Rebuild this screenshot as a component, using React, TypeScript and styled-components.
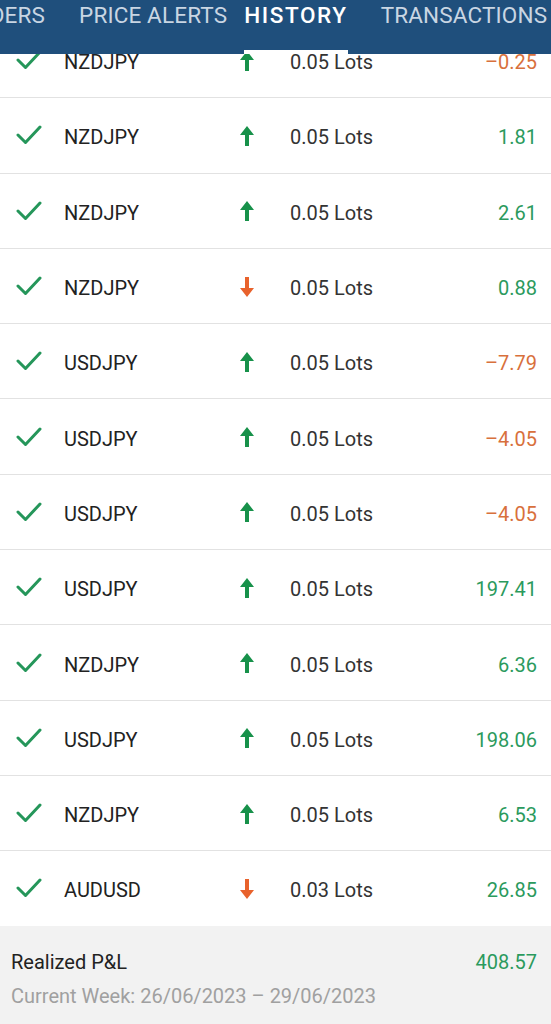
import React from "react";
import styled, { createGlobalStyle } from "styled-components";

interface Trade {
  symbol: string;
  side: "buy" | "sell";
  lots: string;
  pnl: number;
}

// gap = space before the tab label, as laid out in the scrolled tab strip
const tabs = [
  { label: "ORDERS", gap: 0 },
  { label: "PRICE ALERTS", gap: 34 },
  { label: "HISTORY", gap: 17 },
  { label: "TRANSACTIONS", gap: 33 },
];

const trades: Trade[] = [
  { symbol: "NZDJPY", side: "buy", lots: "0.05", pnl: -0.25 },
  { symbol: "NZDJPY", side: "buy", lots: "0.05", pnl: 1.81 },
  { symbol: "NZDJPY", side: "buy", lots: "0.05", pnl: 2.61 },
  { symbol: "NZDJPY", side: "sell", lots: "0.05", pnl: 0.88 },
  { symbol: "USDJPY", side: "buy", lots: "0.05", pnl: -7.79 },
  { symbol: "USDJPY", side: "buy", lots: "0.05", pnl: -4.05 },
  { symbol: "USDJPY", side: "buy", lots: "0.05", pnl: -4.05 },
  { symbol: "USDJPY", side: "buy", lots: "0.05", pnl: 197.41 },
  { symbol: "NZDJPY", side: "buy", lots: "0.05", pnl: 6.36 },
  { symbol: "USDJPY", side: "buy", lots: "0.05", pnl: 198.06 },
  { symbol: "NZDJPY", side: "buy", lots: "0.05", pnl: 6.53 },
  { symbol: "AUDUSD", side: "sell", lots: "0.03", pnl: 26.85 },
];

const formatPnl = (v: number) =>
  v < 0 ? `\u2013${Math.abs(v).toFixed(2)}` : v.toFixed(2);

const CheckIcon = () => (
  <svg width="26" height="22" viewBox="0 0 26 22">
    <polyline
      points="2,11 9.5,18.5 24,3"
      fill="none"
      stroke="#25965a"
      strokeWidth="3"
      strokeLinecap="round"
      strokeLinejoin="round"
    />
  </svg>
);

const SideArrow = ({ side }: { side: "buy" | "sell" }) => (
  <svg
    width="14"
    height="20"
    viewBox="0 0 14 20"
    style={{ transform: side === "sell" ? "rotate(180deg)" : undefined }}
  >
    <path
      d="M7 0 L14 9 L9 9 L9 20 L5 20 L5 9 L0 9 Z"
      fill={side === "buy" ? "#17914a" : "#e8622c"}
    />
  </svg>
);

const App: React.FC = () => {
  return (
    <Page>
      <GlobalStyle />
      <Header>
        <TabTrack>
          {tabs.map((t) => (
            <Tab key={t.label} $active={t.label === "HISTORY"} $gap={t.gap}>
              {t.label}
            </Tab>
          ))}
        </TabTrack>
      </Header>

      <ListViewport>
        <List>
          {trades.map((t, i) => (
            <Row key={i}>
              <CheckCell>
                <CheckIcon />
              </CheckCell>
              <Symbol>{t.symbol}</Symbol>
              <ArrowCell>
                <SideArrow side={t.side} />
              </ArrowCell>
              <Lots>{t.lots} Lots</Lots>
              <Pnl $negative={t.pnl < 0}>{formatPnl(t.pnl)}</Pnl>
            </Row>
          ))}
        </List>
      </ListViewport>

      <Footer>
        <FooterLine>
          <FooterTitle>Realized P&amp;L</FooterTitle>
          <Pnl $negative={false}>408.57</Pnl>
        </FooterLine>
        <FooterSub>Current Week: 26/06/2023 &ndash; 29/06/2023</FooterSub>
      </Footer>
    </Page>
  );
};

export default App;

const GlobalStyle = createGlobalStyle`
  html, body {
    margin: 0;
    padding: 0;
    background: #fff;
  }
  * {
    box-sizing: border-box;
  }
`;

const Page = styled.div`
  width: 551px;
  height: 1024px;
  display: flex;
  flex-direction: column;
  overflow: hidden;
  font-family: Roboto, "Noto Sans", sans-serif;
  background: #fff;
`;

const Header = styled.div`
  height: 54px;
  flex-shrink: 0;
  background: #1f4f7c;
  overflow: hidden;
`;

const TabTrack = styled.div`
  display: flex;
  margin-left: -40px;
  height: 100%;
`;

const Tab = styled.div<{ $active: boolean; $gap: number }>`
  flex-shrink: 0;
  height: 100%;
  margin-left: ${(p) => p.$gap}px;
  padding-top: 2px;
  font-size: 22.5px;
  line-height: 26px;
  letter-spacing: ${(p) => (p.$active ? "1.6px" : "0.15px")};
  white-space: nowrap;
  color: ${(p) => (p.$active ? "#ffffff" : "#c9d6e3")};
  font-weight: ${(p) => (p.$active ? 500 : 400)};
  box-shadow: ${(p) => (p.$active ? "inset 0 -4px 0 #ffffff" : "none")};
`;

const ListViewport = styled.div`
  flex: 1;
  overflow: hidden;
`;

const List = styled.div`
  margin-top: -31px;
  display: flex;
  flex-direction: column;
`;

const Row = styled.div`
  height: 75.3px;
  display: grid;
  grid-template-columns: 64px 176px 50px 1fr auto;
  align-items: center;
  padding: 4px 14px 0 0;
  border-bottom: 1px solid #e2e2e2;
`;

const CheckCell = styled.div`
  padding-left: 16px;
  display: flex;
  align-items: center;
  margin-top: -4px;
`;

const Symbol = styled.div`
  font-size: 20px;
  color: #222;
`;

const ArrowCell = styled.div`
  display: flex;
  align-items: center;
  margin-top: -3px;
`;

const Lots = styled.div`
  font-size: 20px;
  color: #333;
`;

const Pnl = styled.div<{ $negative: boolean }>`
  font-size: 20px;
  text-align: right;
  color: ${(p) => (p.$negative ? "#d8703c" : "#2b9a5d")};
`;

const Footer = styled.div`
  height: 98px;
  flex-shrink: 0;
  background: #f2f2f2;
  padding: 24px 14px 0 11px;
  display: flex;
  flex-direction: column;
  gap: 10px;
`;

const FooterLine = styled.div`
  display: flex;
  justify-content: space-between;
  align-items: center;
`;

const FooterTitle = styled.div`
  font-size: 20px;
  color: #222;
`;

const FooterSub = styled.div`
  font-size: 20px;
  color: #a0a0a0;
`;
